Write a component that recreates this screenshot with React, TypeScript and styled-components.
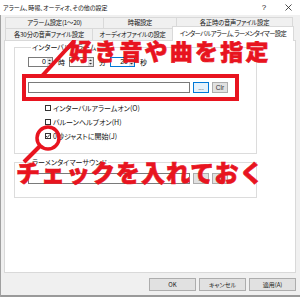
import styled, { createGlobalStyle } from "styled-components";

const RED = "#e8141f";

const GlobalStyle = createGlobalStyle`
  html, body {
    margin: 0;
    padding: 0;
  }
  body {
    width: 300px;
    height: 297px;
    overflow: hidden;
    background: #f0f0f0;
    font-family: "Noto Sans CJK JP", "Noto Sans", sans-serif;
    font-feature-settings: "palt";
    color: #000;
  }
`;

type TabProps = { label: string; width: number; active?: boolean; tight?: boolean };

const row1: TabProps[] = [
  { label: "アラーム設定(1〜20)", width: 99 },
  { label: "時報設定", width: 74 },
  { label: "各正時の音声ファイル設定", width: 117 },
];

const row2: TabProps[] = [
  { label: "各30分の音声ファイル設定", width: 88 },
  { label: "オーディオファイルの設定", width: 81 },
  { label: "インターバルアラーム、ラーメンタイマー設定", width: 122, active: true, tight: true },
];

const checks = [
  { label: "インターバルアラームオン(O)", checked: false },
  { label: "バルーンヘルプオン(H)", checked: false },
  { label: "0秒ジャストに開始(J)", checked: true },
];

function Spin({ value, focused }: { value: string; focused?: boolean }) {
  return (
    <SpinField $focused={focused}>
      <SpinValue>{value}</SpinValue>
      <SpinButtons>
        <svg width="5" height="8" viewBox="0 0 5 8">
          <path d="M1 3 L2.5 1.5 L4 3 Z" fill="#333" />
          <path d="M1 5 L2.5 6.5 L4 5 Z" fill="#333" />
        </svg>
      </SpinButtons>
    </SpinField>
  );
}

function FileRow({ focused }: { focused?: boolean }) {
  return (
    <PathRow>
      <PathInput />
      <SmallButton $focused={focused}>...</SmallButton>
      <SmallButton>Clr</SmallButton>
    </PathRow>
  );
}

export default function App() {
  return (
    <Window>
      <GlobalStyle />
      <TitleBar>
        <TitleText>アラーム、時報、オーディオ、その他の設定</TitleText>
        <TitleButton>?</TitleButton>
        <TitleButton>
          <svg width="7" height="7" viewBox="0 0 7 7">
            <path d="M0.5 0.5 L6.5 6.5 M6.5 0.5 L0.5 6.5" stroke="#222" strokeWidth="0.8" />
          </svg>
        </TitleButton>
      </TitleBar>

      <Body>
        <TabRow>
          {row1.map((t) => (
            <Tab key={t.label} $width={t.width}>
              {t.label}
            </Tab>
          ))}
        </TabRow>
        <TabRow $lower>
          {row2.map((t) => (
            <Tab key={t.label} $width={t.width} $active={t.active} $tight={t.tight} $lower>
              {t.label}
            </Tab>
          ))}
        </TabRow>

        <Panel>
          <Group $h={112}>
            <GroupLabel>インターバルアラーム</GroupLabel>
            <TimeRow>
              <Spin value="0" />
              <Unit>時</Unit>
              <Spin value="" />
              <Unit>分</Unit>
              <Spin value="20" focused />
              <Unit>秒</Unit>
            </TimeRow>
            <Spaced $top={15}>
              <FileRow focused />
            </Spaced>
            <CheckList>
              {checks.map((c) => (
                <CheckRow key={c.label}>
                  <CheckBox>
                    {c.checked && (
                      <svg width="6" height="6" viewBox="0 0 6 6">
                        <path d="M1 3 L2.4 4.4 L5 1.4" stroke="#222" strokeWidth="0.9" fill="none" />
                      </svg>
                    )}
                  </CheckBox>
                  {c.label}
                </CheckRow>
              ))}
            </CheckList>
          </Group>

          <Group $h={41} $gap={3}>
            <GroupLabel>ラーメンタイマーサウンド</GroupLabel>
            <Spaced $top={6}>
              <FileRow />
            </Spaced>
          </Group>
        </Panel>

        <ButtonBar>
          <DialogButton>OK</DialogButton>
          <DialogButton>キャンセル</DialogButton>
          <DialogButton>適用(A)</DialogButton>
        </ButtonBar>
      </Body>

      <Marks width="300" height="297" viewBox="0 0 300 297">
        <line x1="74" y1="41" x2="42" y2="76" stroke={RED} strokeWidth="4" />
        <rect x="24" y="76" width="213" height="23" stroke={RED} strokeWidth="4" fill="none" />
        <circle cx="48" cy="138" r="11" stroke={RED} strokeWidth="3.5" fill="none" />
        <line x1="40" y1="146" x2="24" y2="162" stroke={RED} strokeWidth="4" />
      </Marks>
      <Callout $left={69} $top={39} $size={23} $spacing={2.2}>
        好き音や曲を指定
      </Callout>
      <Callout $left={16} $top={160} $size={24} $spacing={1}>
        チェックを入れておく
      </Callout>
    </Window>
  );
}

const Window = styled.div`
  position: relative;
  width: 300px;
  height: 297px;
  background: #f0f0f0;
  box-shadow: inset 1px 0 0 #a0a0a0, inset 0 -2px 0 #9a9a9a;
  overflow: hidden;
`;

const TitleBar = styled.div`
  display: flex;
  align-items: center;
  height: 15px;
  padding-left: 3px;
  background: #fff;
`;

const TitleText = styled.span`
  flex: 1;
  font-size: 6px;
  line-height: 8px;
  color: #111;
`;

const TitleButton = styled.span`
  display: flex;
  align-items: center;
  justify-content: center;
  width: 24px;
  height: 15px;
  font-family: "Liberation Sans", sans-serif;
  font-size: 8px;
  color: #222;
`;

const Body = styled.div`
  padding: 2px 4px 0 4px;
`;

const TabRow = styled.div<{ $lower?: boolean }>`
  display: flex;
  align-items: flex-end;
  height: 12px;
  margin-left: 1px;
  margin-top: ${(p) => (p.$lower ? "-1px" : "0")};
`;

const Tab = styled.div<{ $width: number; $active?: boolean; $lower?: boolean; $tight?: boolean }>`
  position: relative;
  z-index: ${(p) => (p.$active ? 2 : 1)};
  box-sizing: border-box;
  display: flex;
  align-items: center;
  justify-content: center;
  width: ${(p) => p.$width}px;
  height: ${(p) => (p.$active ? 15 : 12)}px;
  margin-right: -1px;
  margin-bottom: ${(p) => (p.$active ? "-1px" : "0")};
  border: 1px solid #d9d9d9;
  border-bottom: ${(p) => (p.$lower ? "none" : "1px solid #d9d9d9")};
  background: ${(p) => (p.$active ? "#fff" : "#f0f0f0")};
  font-size: 6.3px;
  line-height: 8px;
  letter-spacing: ${(p) => (p.$tight ? "-0.6px" : "-0.2px")};
  white-space: nowrap;
  overflow: hidden;
  color: #111;
`;

const Panel = styled.div`
  box-sizing: border-box;
  height: 233px;
  padding: 1px 0 0 9px;
  background: #fff;
  border: 1px solid #d9d9d9;
`;

const Group = styled.fieldset<{ $h: number; $gap?: number }>`
  box-sizing: border-box;
  width: 243px;
  height: ${(p) => p.$h}px;
  min-width: 0;
  margin: ${(p) => p.$gap ?? 0}px 0 0 0;
  padding: 0 0 0 13px;
  border: 1px solid #dcdcdc;
`;

const GroupLabel = styled.legend`
  margin-left: 3px;
  padding: 0 1px;
  font-size: 7px;
  line-height: 10px;
  color: #111;
`;

const TimeRow = styled.div`
  display: flex;
  align-items: center;
  height: 10px;
  margin-top: 5px;
`;

const SpinField = styled.div<{ $focused?: boolean }>`
  box-sizing: border-box;
  display: flex;
  width: 25px;
  height: 10px;
  border: 1px solid ${(p) => (p.$focused ? "#0078d7" : "#7a7a7a")};
  background: #fff;
`;

const SpinValue = styled.span`
  flex: 1;
  padding-right: 1px;
  text-align: right;
  font-family: "Liberation Sans", sans-serif;
  font-size: 7px;
  line-height: 8px;
`;

const SpinButtons = styled.span`
  display: flex;
  align-items: center;
  width: 5px;
  background: #e3e3e3;
`;

const Unit = styled.span`
  box-sizing: border-box;
  width: 16px;
  padding-left: 5px;
  font-size: 7px;
  line-height: 10px;
`;

const Spaced = styled.div<{ $top: number }>`
  margin-top: ${(p) => p.$top}px;
`;

const PathRow = styled.div`
  display: flex;
  gap: 3px;
  height: 11px;
`;

const PathInput = styled.div`
  box-sizing: border-box;
  width: 162px;
  height: 11px;
  border: 1px solid #7a7a7a;
  background: #fff;
`;

const SmallButton = styled.div<{ $focused?: boolean }>`
  box-sizing: border-box;
  display: flex;
  align-items: center;
  justify-content: center;
  width: 16px;
  height: 11px;
  border: 1px solid ${(p) => (p.$focused ? "#0078d7" : "#adadad")};
  background: ${(p) => (p.$focused ? "#e5f1fb" : "#e1e1e1")};
  font-family: "Liberation Sans", sans-serif;
  font-size: 6.5px;
  color: #333;
`;

const CheckList = styled.div`
  display: flex;
  flex-direction: column;
  margin-top: 8px;
  padding-left: 17px;
`;

const CheckRow = styled.div`
  display: flex;
  align-items: center;
  gap: 2px;
  height: 14px;
  font-size: 7px;
  line-height: 9px;
  color: #111;
`;

const CheckBox = styled.span`
  box-sizing: border-box;
  display: flex;
  width: 6px;
  height: 6px;
  border: 1px solid #333;
  background: #fff;
  svg {
    margin: -1px;
  }
`;

const ButtonBar = styled.div`
  display: flex;
  justify-content: flex-end;
  gap: 3px;
  margin-top: 5px;
`;

const DialogButton = styled.div`
  box-sizing: border-box;
  display: flex;
  align-items: center;
  justify-content: center;
  width: 47px;
  height: 13px;
  border: 1px solid #adadad;
  background: #e1e1e1;
  font-size: 6px;
  color: #222;
`;

const Marks = styled.svg`
  position: absolute;
  left: 0;
  top: 0;
  pointer-events: none;
`;

const Callout = styled.span<{ $left: number; $top: number; $size: number; $spacing: number }>`
  position: absolute;
  left: ${(p) => p.$left}px;
  top: ${(p) => p.$top}px;
  font-size: ${(p) => p.$size}px;
  line-height: 1;
  letter-spacing: ${(p) => p.$spacing}px;
  font-weight: 900;
  font-feature-settings: normal;
  -webkit-text-stroke: 0.6px ${RED};
  color: ${RED};
  white-space: nowrap;
  pointer-events: none;
`;
